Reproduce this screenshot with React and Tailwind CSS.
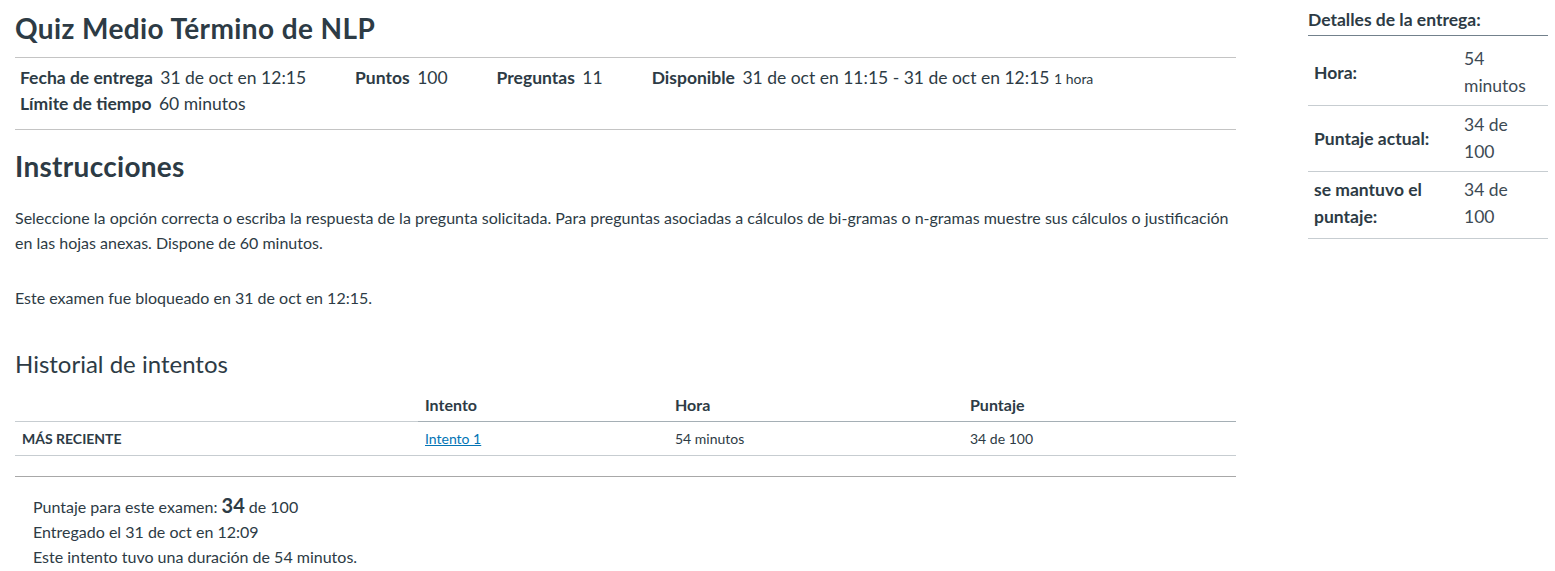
export default function App() {
  const details = [
    ["Fecha de entrega", "31 de oct en 12:15"],
    ["Puntos", "100"],
    ["Preguntas", "11"],
  ];

  const side = [
    ["Hora:", ["54", "minutos"], "pt-[9px] pb-[6px]"],
    ["Puntaje actual:", ["34 de", "100"], "pt-[5px] pb-[6px]"],
    [["se mantuvo el", "puntaje:"], ["34 de", "100"], "pt-[4px] pb-[8px]"],
  ];

  return (
    <div className="flex bg-white text-[#2d3b45]" style={{ fontFamily: "Lato, 'Noto Sans', sans-serif" }}>
      {/* main column */}
      <div className="ml-[15px] w-[1221px] shrink-0">
        <h1 className="mt-[11px] text-[28px] font-bold leading-[35px] tracking-[0.4px]">Quiz Medio Término de NLP</h1>
        <hr className="mt-[11px] border-t border-[#c4c4c4]" />

        <div className="pl-[5px] pt-[7px] pb-[12px] text-[17.5px] leading-[26px]">
          <div className="flex gap-x-[49px]">
            {details.map(([k, v]) => (
              <div key={k}>
                <span className="mr-[3px] font-bold">{k}</span> {v}
              </div>
            ))}
            <div>
              <span className="mr-[3px] font-bold">Disponible</span> 31 de oct en 11:15 - 31 de oct en 12:15{" "}
              <span className="text-[14px] leading-none">1 hora</span>
            </div>
          </div>
          <div>
            <span className="mr-[3px] font-bold">Límite de tiempo</span> 60 minutos
          </div>
        </div>
        <hr className="border-t border-[#c4c4c4]" />

        <h2 className="mt-[19px] text-[28px] font-bold leading-[35px] tracking-[0.3px]">Instrucciones</h2>
        <p className="mt-[21px] text-[16px] leading-[25px]">
          Seleccione la opción correcta o escriba la respuesta de la pregunta solicitada. Para preguntas asociadas a
          cálculos de bi-gramas o n-gramas muestre sus cálculos o justificación en las hojas anexas. Dispone de 60
          minutos.
        </p>
        <p className="mt-[30px] text-[16px] leading-[25px]">Este examen fue bloqueado en 31 de oct en 12:15.</p>

        <h3 className="mt-[39px] text-[24px] leading-[30px]">Historial de intentos</h3>

        <table className="mt-[10px] w-full border-collapse">
          <thead>
            <tr className="h-[32px] text-left text-[16px]">
              <td className="w-[403px] border-b border-[#c7cdd1]"></td>
              <th className="w-[250px] border-b border-[#a5afb5] px-[7px] font-bold">Intento</th>
              <th className="w-[295px] border-b border-[#a5afb5] px-[7px] font-bold">Hora</th>
              <th className="border-b border-[#a5afb5] px-[7px] font-bold">Puntaje</th>
            </tr>
          </thead>
          <tbody>
            <tr className="h-[34px] border-b border-[#c7cdd1] text-[14px]">
              <td className="px-[7px] font-bold">MÁS RECIENTE</td>
              <td className="px-[7px]">
                <a href="#" className="text-[#0374b5] underline">
                  Intento 1
                </a>
              </td>
              <td className="px-[7px]">54 minutos</td>
              <td className="px-[7px]">34 de 100</td>
            </tr>
          </tbody>
        </table>

        <hr className="mt-[20px] border-t border-[#a8a8a8]" />

        <div className="pl-[18px] pt-[17px] text-[16px] leading-[25px]">
          <div>
            Puntaje para este examen: <span className="text-[20px] font-bold leading-none">34</span> de 100
          </div>
          <div>Entregado el 31 de oct en 12:09</div>
          <div>Este intento tuvo una duración de 54 minutos.</div>
        </div>
      </div>

      {/* sidebar */}
      <div className="ml-[72px] w-[240px] shrink-0">
        <div className="mt-[8px] border-b border-[#73818c] pb-[3px] text-[17.5px] font-bold leading-[24px]">
          Detalles de la entrega:
        </div>
        {side.map(([k, v, pad], i) => (
          <div key={i} className={`flex border-b border-[#c7cdd1] text-[17.5px] leading-[27px] ${pad}`}>
            <div className="flex w-[150px] items-center px-[6px] font-bold">
              <div>
                {Array.isArray(k) ? (
                  <>
                    {k[0]}
                    <br />
                    {k[1]}
                  </>
                ) : (
                  k
                )}
              </div>
            </div>
            <div className="px-[6px] text-[#3d4a54]">
              {v[0]}
              <br />
              {v[1]}
            </div>
          </div>
        ))}
      </div>
    </div>
  );
}
